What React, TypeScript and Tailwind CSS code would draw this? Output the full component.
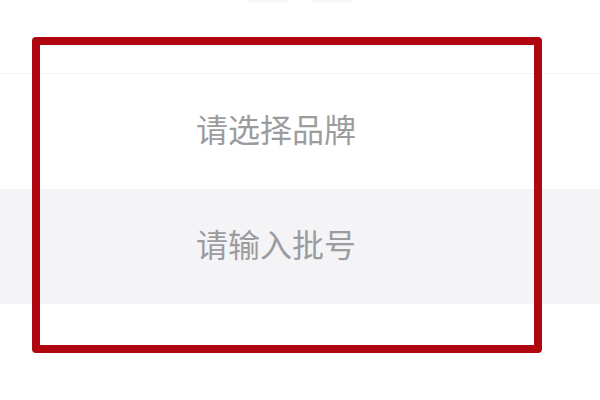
// Form rows (brand picker + batch input) with a red highlight frame over them.
const rows = [
  { label: '请选择品牌', className: 'bg-white' },
  { label: '请输入批号', className: 'bg-[#f4f3f6]' },
];

export default function App() {
  return (
    <div
      className="relative w-[600px] h-[400px] overflow-hidden bg-white"
      style={{ fontFamily: '"Noto Sans CJK SC", "Noto Sans", sans-serif' }}
    >
      {/* cut-off header text at the very top */}
      <div className="h-[73px] flex justify-center gap-6">
        <span className="block w-10 h-[3px] bg-[#f8f8f8] rounded-b" />
        <span className="block w-10 h-[3px] bg-[#f9f9f9] rounded-b" />
      </div>
      <div className="h-px bg-[#f3f3f3]" />

      {rows.map((r) => (
        <div
          key={r.label}
          className={`h-[115px] flex items-center pl-[196px] pb-2 text-[32px] leading-none text-[#9c9c9e] ${r.className}`}
        >
          {r.label}
        </div>
      ))}

      {/* highlight frame */}
      <div className="absolute left-[32px] top-[37px] w-[510px] h-[316px] border-[8px] border-[#b0060f] rounded-[4px] pointer-events-none" />
    </div>
  );
}
